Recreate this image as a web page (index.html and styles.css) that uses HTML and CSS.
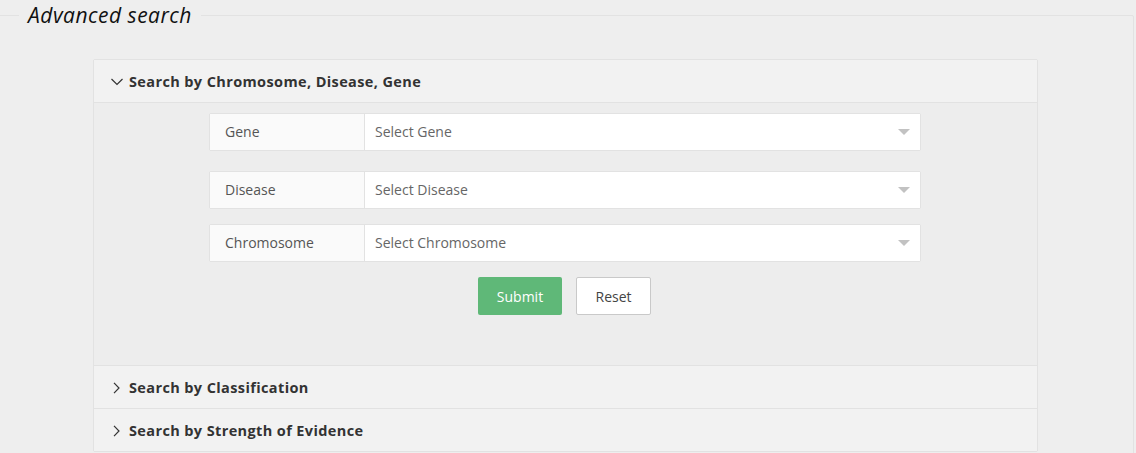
FILE: index.html
```html
<!DOCTYPE html>
<html>
<head>
<meta charset="utf-8">
<link rel="stylesheet" href="styles.css">
</head>
<body>
<fieldset class="box">
  <legend class="box-title">Advanced search</legend>
  <div class="collapse">
    <div class="item">
      <div class="title">
        <svg class="chev" width="12" height="8" viewBox="0 0 12 8"><path d="M0.5 1 L6 6.5 L11.5 1" fill="none" stroke="#333" stroke-width="1.2"/></svg>
        Search by Chromosome, Disease, Gene
      </div>
      <div class="content">
        <div class="row r1">
          <div class="label">Gene</div>
          <div class="select">Select Gene<span class="edge"></span></div>
        </div>
        <div class="row r2">
          <div class="label">Disease</div>
          <div class="select">Select Disease<span class="edge"></span></div>
        </div>
        <div class="row r3">
          <div class="label">Chromosome</div>
          <div class="select">Select Chromosome<span class="edge"></span></div>
        </div>
        <div class="buttons">
          <button class="btn btn-green">Submit</button>
          <button class="btn btn-plain">Reset</button>
        </div>
      </div>
    </div>
    <div class="item">
      <div class="title">
        <svg class="chev-r" width="7" height="12" viewBox="0 0 7 12"><path d="M1 0.8 L6 6 L1 11.2" fill="none" stroke="#333" stroke-width="1.2"/></svg>
        Search by Classification
      </div>
    </div>
    <div class="item">
      <div class="title">
        <svg class="chev-r" width="7" height="12" viewBox="0 0 7 12"><path d="M1 0.8 L6 6 L1 11.2" fill="none" stroke="#333" stroke-width="1.2"/></svg>
        Search by Strength of Evidence
      </div>
    </div>
  </div>
</fieldset>
</body>
</html>
```

FILE: styles.css
```css
html, body {
  margin: 0;
  padding: 0;
  background: #eeeeee;
  font-family: "Open Sans", "Noto Sans", sans-serif;
  color: #333;
}
.box {
  margin: 0 2px 0 -2px;
  padding: 29px 0 20px 0;
  border: 1px solid #e2e2e2;
  border-radius: 2px;
}
.box-title {
  margin-left: 20px;
  padding: 0 9px;
  font-size: 21px;
  line-height: 30px;
  font-style: italic;
  font-weight: 400;
  color: #111;
  letter-spacing: 0.5px;
}
.collapse {
  width: 943px;
  margin: 0 0 0 94px;
  border: 1px solid #e2e2e2;
  border-radius: 2px;
}
.item + .item {
  border-top: 1px solid #e2e2e2;
}
.title {
  position: relative;
  height: 42px;
  line-height: 44px;
  padding: 0 15px 0 35px;
  background: #f2f2f2;
  font-size: 14.5px;
  font-weight: 700;
  color: #333;
  letter-spacing: 0.38px;
}
.chev {
  position: absolute;
  left: 17px;
  top: 18px;
}
.chev-r {
  position: absolute;
  left: 19px;
  top: 16px;
}
.content {
  border-top: 1px solid #e2e2e2;
  background: #ededed;
  padding: 10px 0 50px 115px;
  display: flex;
  flex-direction: column;
  align-items: flex-start;
}
.row {
  width: 712px;
  height: 38px;
  display: flex;
  box-sizing: border-box;
  border: 1px solid #e2e2e2;
  border-radius: 2px;
  font-size: 14px;
}
.r2 { margin-top: 20px; }
.r3 { margin-top: 15px; }
.label {
  width: 155px;
  box-sizing: border-box;
  background: #fafafa;
  border-right: 1px solid #e2e2e2;
  padding-left: 15px;
  line-height: 36px;
  color: #555;
}
.select {
  position: relative;
  flex: 1;
  background: #fff;
  padding-left: 10px;
  line-height: 36px;
  color: #666;
}
.edge {
  position: absolute;
  right: 10px;
  top: 15px;
  width: 0;
  height: 0;
  border-left: 6px solid transparent;
  border-right: 6px solid transparent;
  border-top: 6px solid #c2c2c2;
}
.buttons {
  margin: 15px 0 0 269px;
  display: flex;
  gap: 14px;
}
.btn {
  height: 38px;
  box-sizing: border-box;
  padding: 0;
  font-family: "Open Sans", "Noto Sans", sans-serif;
  font-size: 14px;
  border-radius: 2px;
  cursor: pointer;
}
.btn-green {
  width: 84px;
  background: #5fb878;
  color: #fff;
  border: none;
}
.btn-plain {
  width: 75px;
  background: #fff;
  color: #444;
  border: 1px solid #c9c9c9;
}
```
